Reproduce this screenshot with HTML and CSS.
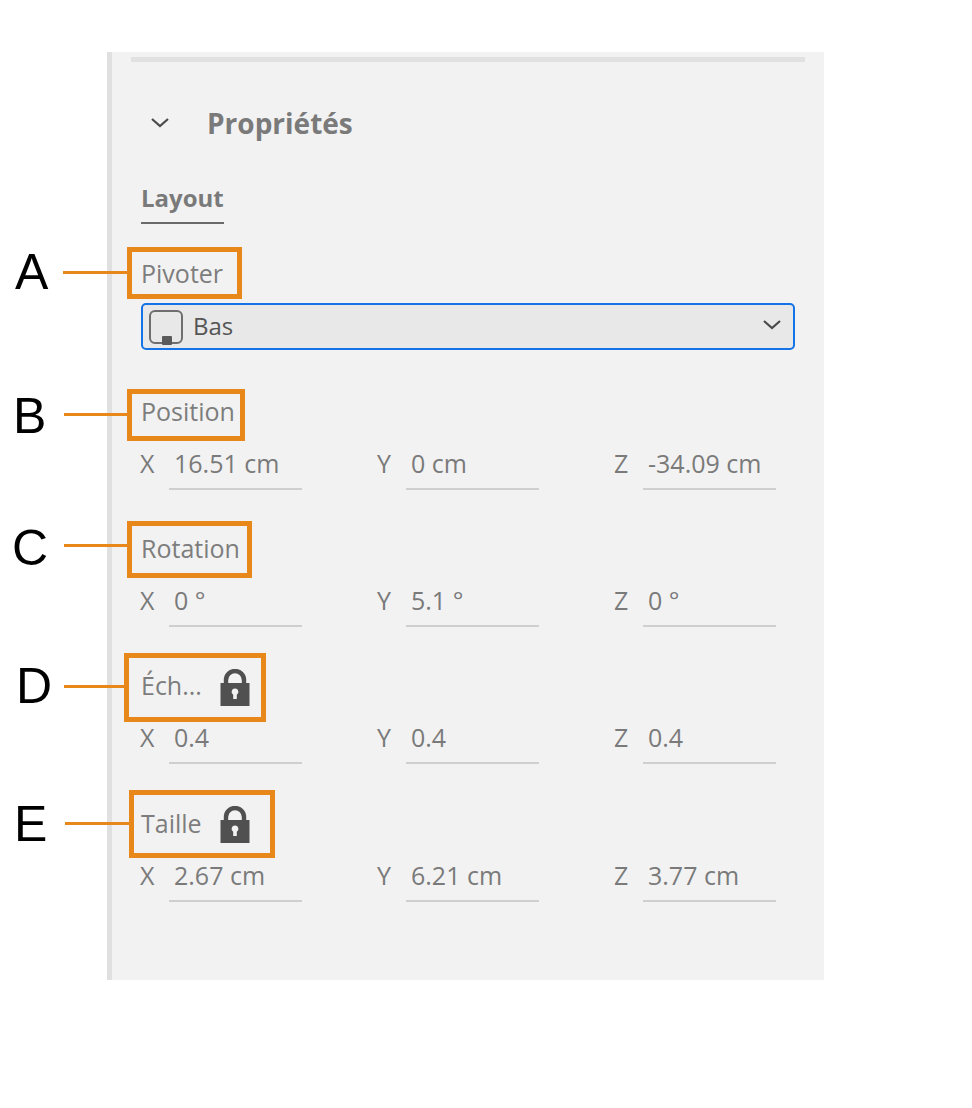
FILE: index.html
```html
<!DOCTYPE html>
<html lang="fr">
<head>
<meta charset="utf-8">
<title>Propriétés</title>
<link rel="stylesheet" href="styles.css">
</head>
<body>
<main class="panel">
  <div class="top-bar"></div>
  <header class="panel-head">
    <svg class="chev" width="20" height="12" viewBox="0 0 20 12"><path d="M2 2l8 7 8-7" fill="none" stroke="#4a4a4a" stroke-width="2.2"/></svg>
    <h1>Propriétés</h1>
  </header>
  <div class="tab-row"><span class="tab">Layout</span></div>

  <section class="pivot">
    <div class="label">Pivoter</div>
    <div class="select">
      <svg class="select-icon" width="34" height="36" viewBox="0 0 34 36"><rect x="1" y="1" width="32" height="32" rx="5" fill="none" stroke="#6e6e6e" stroke-width="2"/><rect x="13" y="26" width="10" height="9" rx="1" fill="#5a5a5a"/></svg>
      <span class="select-text">Bas</span>
      <svg class="select-chev" width="20" height="12" viewBox="0 0 20 12"><path d="M2 2l8 7 8-7" fill="none" stroke="#4a4a4a" stroke-width="2.2"/></svg>
    </div>
  </section>

  <section class="group group-position">
    <div class="label">Position</div>
    <div class="fields">
      <div class="field"><span class="axis">X</span><span class="value">16.51 cm</span></div>
      <div class="field"><span class="axis">Y</span><span class="value">0 cm</span></div>
      <div class="field"><span class="axis">Z</span><span class="value">-34.09 cm</span></div>
    </div>
  </section>

  <section class="group">
    <div class="label">Rotation</div>
    <div class="fields">
      <div class="field"><span class="axis">X</span><span class="value">0 °</span></div>
      <div class="field"><span class="axis">Y</span><span class="value">5.1 °</span></div>
      <div class="field"><span class="axis">Z</span><span class="value">0 °</span></div>
    </div>
  </section>

  <section class="group">
    <div class="label label-lock"><span class="lock-text">Éch...</span>
      <svg class="lock" width="30" height="37" viewBox="0 0 30 37"><path d="M6 15V11a9 9 0 0 1 18 0v4" fill="none" stroke="#505050" stroke-width="4.4"/><path fill-rule="evenodd" d="M0.5 14h29v23h-29zM15 19.500a3.400 3.400 0 0 0-1.800 6.300V30h3.600v-4.200A3.400 3.400 0 0 0 15 19.500z" fill="#505050"/></svg>
    </div>
    <div class="fields">
      <div class="field"><span class="axis">X</span><span class="value">0.4</span></div>
      <div class="field"><span class="axis">Y</span><span class="value">0.4</span></div>
      <div class="field"><span class="axis">Z</span><span class="value">0.4</span></div>
    </div>
  </section>

  <section class="group">
    <div class="label label-lock"><span class="lock-text">Taille</span>
      <svg class="lock" width="30" height="37" viewBox="0 0 30 37"><path d="M6 15V11a9 9 0 0 1 18 0v4" fill="none" stroke="#505050" stroke-width="4.4"/><path fill-rule="evenodd" d="M0.5 14h29v23h-29zM15 19.500a3.400 3.400 0 0 0-1.800 6.300V30h3.600v-4.200A3.400 3.400 0 0 0 15 19.500z" fill="#505050"/></svg>
    </div>
    <div class="fields">
      <div class="field"><span class="axis">X</span><span class="value">2.67 cm</span></div>
      <div class="field"><span class="axis">Y</span><span class="value">6.21 cm</span></div>
      <div class="field"><span class="axis">Z</span><span class="value">3.77 cm</span></div>
    </div>
  </section>
</main>

<div class="callout box-a"></div><div class="leader lead-a"></div><div class="letter let-a">A</div>
<div class="callout box-b"></div><div class="leader lead-b"></div><div class="letter let-b">B</div>
<div class="callout box-c"></div><div class="leader lead-c"></div><div class="letter let-c">C</div>
<div class="callout box-d"></div><div class="leader lead-d"></div><div class="letter let-d">D</div>
<div class="callout box-e"></div><div class="leader lead-e"></div><div class="letter let-e">E</div>
</body>
</html>
```
FILE: styles.css
```css
* { box-sizing: border-box; }
html, body { margin: 0; padding: 0; background: #fff; }
body { position: relative; width: 972px; height: 1108px; overflow: hidden; font-family: "Open Sans", "Noto Sans", sans-serif; color: #7a7a7a; }

.panel { margin: 52px 0 0 107px; width: 717px; height: 928px; background: #f2f2f2; border-left: 5px solid #e0e0e0; padding: 5px 19px 0 19px; }
.top-bar { height: 5px; background: #e1e1e1; }

.panel-head { display: flex; align-items: center; height: 44px; margin-top: 39px; padding-left: 19px; }
.panel-head h1 { margin: 0 0 0 37px; font-size: 28px; font-weight: 700; line-height: 44px; color: #7a7a7a; }
.chev { flex: none; }

.tab-row { margin-top: 35px; padding-left: 10px; height: 44px; }
.tab { display: inline-block; height: 44px; line-height: 36px; font-size: 24px; font-weight: 700; color: #7a7a7a; border-bottom: 2px solid #6a6a6a; }

.label { font-size: 25px; line-height: 34px; color: #7d7d7d; height: 34px; }
.pivot { margin-top: 32px; padding-left: 10px; }
.select { display: flex; align-items: center; margin-top: 13px; width: 654px; height: 47px; border: 2.5px solid #1473e6; border-radius: 5px; background: #e8e8e8; padding: 0 11px 0 6px; }
.select-icon { margin-top: 2px; }
.select-text { margin: 0 0 2px 10px; font-size: 24px; color: #555; }
.select-chev { margin: 0 0 3px auto; }

.group { padding-left: 9px; height: 137.2px; }
.group-position { margin-top: 44px; }
.group > .label { padding-left: 1px; }
.label-lock { display: flex; align-items: center; }
.lock-text { width: 79px; flex: none; }
.lock { flex: none; margin-top: 4px; }

.fields { display: grid; grid-template-columns: repeat(3, 237px); margin-top: 18px; }
.field { display: flex; align-items: flex-start; height: 44px; }
.axis { width: 29px; font-size: 25px; line-height: 34px; color: #7a7a7a; }
.value { width: 133px; height: 44px; padding-left: 5px; font-size: 25px; line-height: 34px; color: #7a7a7a; border-bottom: 2px solid #cfcfcf; white-space: nowrap; }

.callout { position: absolute; border: 5px solid #e8871a; }
.box-a { left: 127px; top: 247px; width: 115px; height: 52px; }
.box-b { left: 127px; top: 389px; width: 118px; height: 52px; }
.box-c { left: 127px; top: 521px; width: 125px; height: 57px; }
.box-d { left: 124px; top: 653px; width: 142px; height: 69px; }
.box-e { left: 129px; top: 790px; width: 146px; height: 68px; }

.leader { position: absolute; height: 3px; background: #e8871a; }
.lead-a { left: 63px; top: 271px; width: 65px; }
.lead-b { left: 64px; top: 413px; width: 64px; }
.lead-c { left: 64px; top: 544px; width: 64px; }
.lead-d { left: 64px; top: 685px; width: 61px; }
.lead-e { left: 65px; top: 822px; width: 65px; }

.letter { position: absolute; font-family: "Liberation Sans", Arial, sans-serif; font-size: 50px; line-height: 56px; color: #000; }
.let-a { left: 15px; top: 244px; }
.let-b { left: 13px; top: 388px; }
.let-c { left: 12px; top: 520px; }
.let-d { left: 16px; top: 658px; }
.let-e { left: 14px; top: 796px; }
```
